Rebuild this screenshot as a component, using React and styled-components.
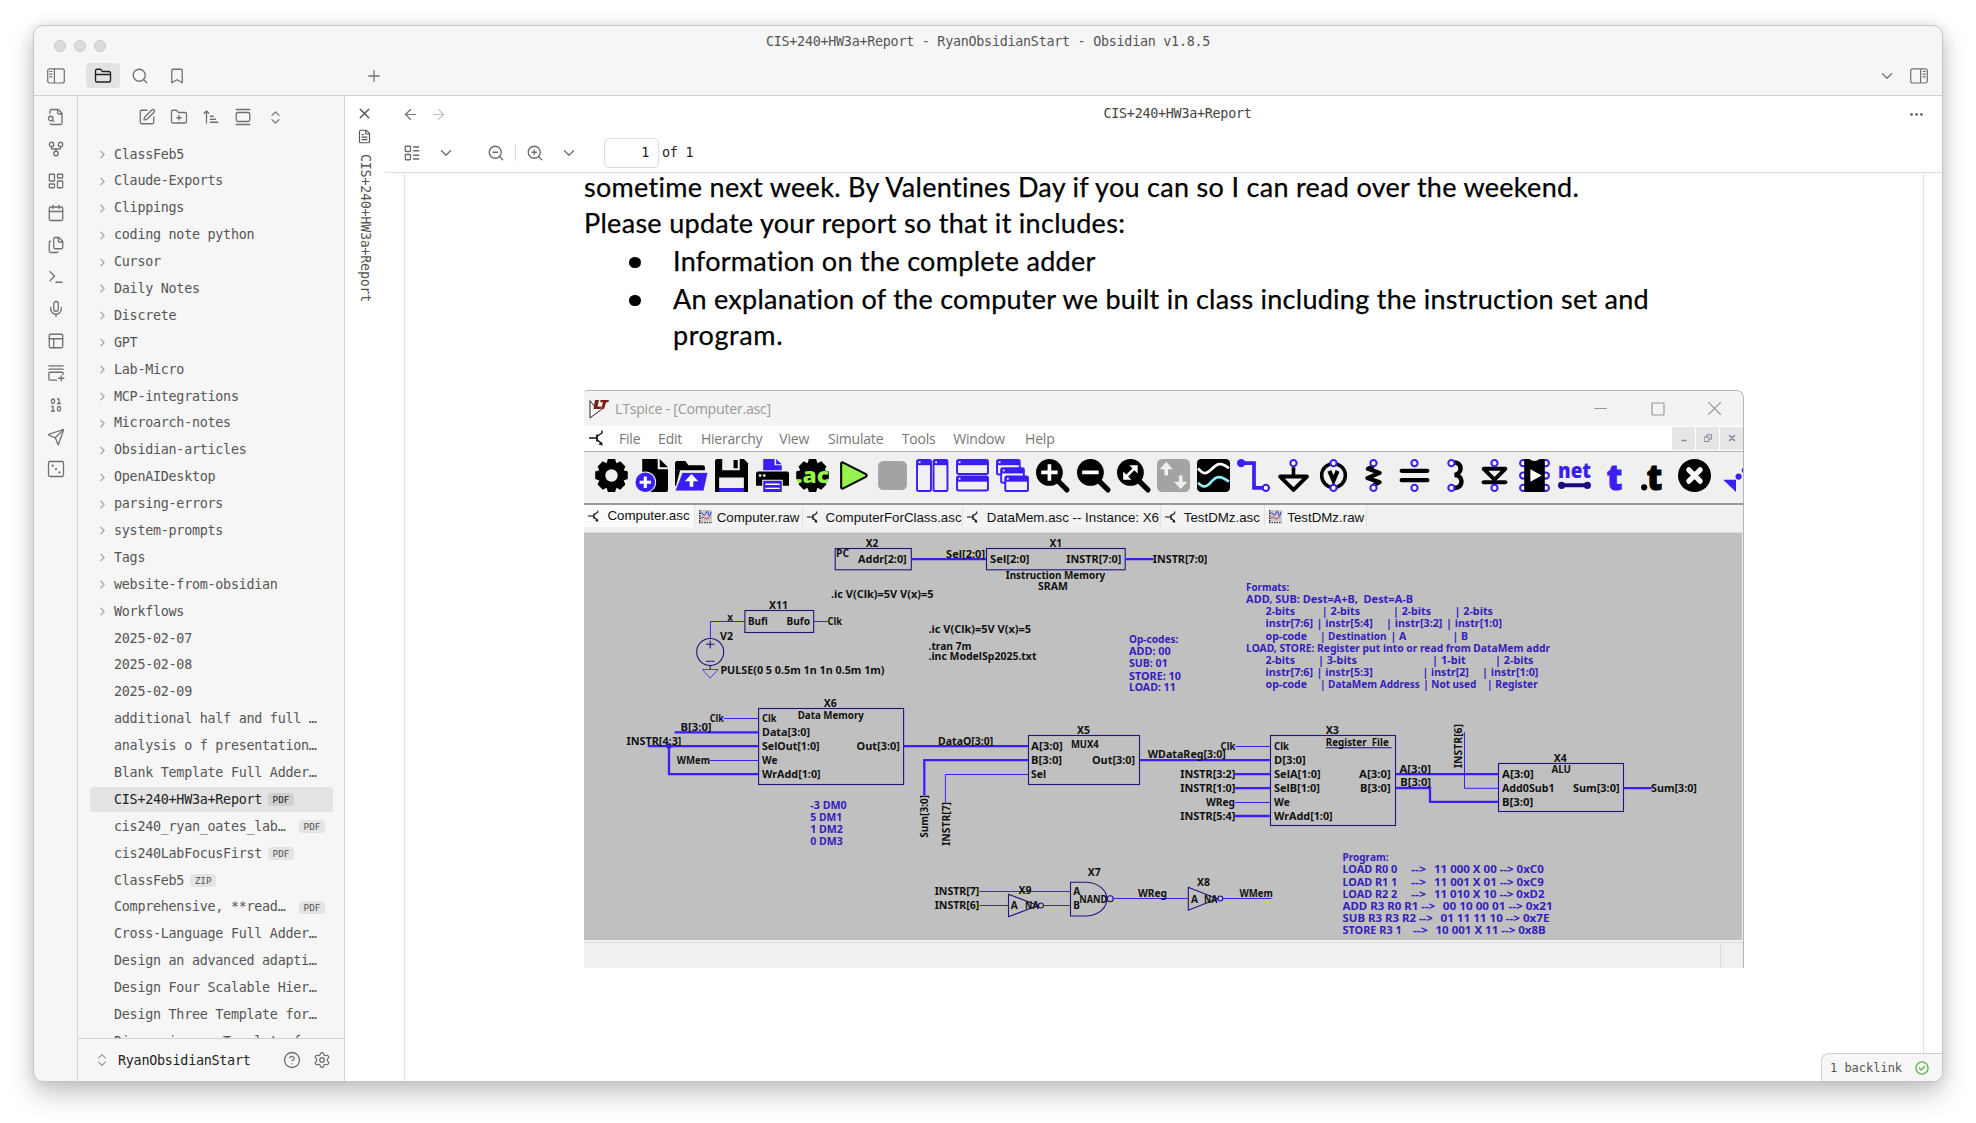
import React from "react";
import styled, { createGlobalStyle, css } from "styled-components";
import {
  SquarePen, FolderPlus, GalleryVertical, ChevronsUpDown, ChevronRight, ChevronDown,
  GitFork, LayoutDashboard, Calendar, Files, Terminal, Mic, PanelsTopLeft, Binary, Send,
  Dice3, Settings, X, FileText, ArrowLeft, ArrowRight, LayoutList, ZoomIn, ZoomOut,
  Ellipsis, Plus, Search, Bookmark, FolderClosed,
} from "lucide-react";

const MONO = '"DejaVu Sans Mono", "Liberation Mono", monospace';

const GlobalStyle = createGlobalStyle`
  *, *::before, *::after { box-sizing: border-box; }
  html, body { margin: 0; background: #fff; overflow: hidden; }
  body { font-family: ${MONO}; font-size: 13.4px; letter-spacing: -0.27px; color: #555; }
`;

const Desktop = styled.div`
  width: 1976px;
  height: 1123px;
  padding: 25px 33px 41px;
  background: #fff;
  overflow: hidden;
`;

const AppWindow = styled.div`
  width: 1910px;
  height: 1057px;
  display: flex;
  flex-direction: column;
  border: 1px solid #c6c6c6;
  border-radius: 10px;
  background: #f6f6f6;
  overflow: hidden;
  box-shadow: 0 12px 26px rgba(0, 0, 0, 0.22), 0 0 14px rgba(0, 0, 0, 0.1);
`;

const TitleBar = styled.div`
  height: 37px;
  flex: none;
  display: grid;
  grid-template-columns: 200px 1fr 200px;
  align-items: center;
`;
const Lights = styled.div`
  display: flex;
  gap: 8px;
  padding: 3px 0 0 20px;
`;
const Light = styled.span`
  width: 12px;
  height: 12px;
  border-radius: 50%;
  background: #dcdcdc;
  border: 1px solid #c8c8c8;
`;
const WindowTitle = styled.div`
  text-align: center;
  padding: 0 0 5px 0;
  line-height: 18px;
`;

const TabBar = styled.div`
  height: 33px;
  flex: none;
  display: flex;
  align-items: center;
  padding: 0 14px 7px 13px;
  border-bottom: 1px solid #d0d0d0;
  color: #707070;
`;
const IconCell = styled.span`
  width: ${(p) => p.$w || 32}px;
  height: ${(p) => p.$h || 25}px;
  flex: none;
  display: flex;
  align-items: center;
  justify-content: center;
  border-radius: 4px;
  margin-left: ${(p) => p.$ml || 0}px;
  color: ${(p) => p.$color || "inherit"};
  background: ${(p) => (p.$on ? "#e3e3e3" : "transparent")};
  svg { display: block; }
`;
const Spacer = styled.span`flex: 1;`;

const Body = styled.div`
  flex: 1;
  min-height: 0;
  display: flex;
`;

const Ribbon = styled.div`
  width: 44px;
  flex: none;
  padding-top: 5px;
  display: flex;
  flex-direction: column;
  align-items: center;
  border-right: 1px solid #d4d4d4;
  color: #707070;
`;

const Sidebar = styled.div`
  width: 267px;
  flex: none;
  display: flex;
  flex-direction: column;
  border-right: 1px solid #d0d0d0;
`;
const SidebarTools = styled.div`
  height: 45px;
  flex: none;
  display: flex;
  justify-content: center;
  align-items: center;
  padding-bottom: 3px;
  color: #707070;
`;
const Tree = styled.div`
  flex: 1;
  min-height: 0;
  overflow: hidden;
  padding: 1px 11px 0 12px;
`;
const Row = styled.div`
  height: 25px;
  margin-bottom: 1.905px;
  padding-right: 8px;
  display: flex;
  align-items: center;
  border-radius: 4px;
  white-space: pre;
  line-height: 20px;
  color: #555;
  ${(p) => p.$active && css`background: #e3e3e3; color: #222;`}
`;
const Twisty = styled.span`
  width: 24px;
  flex: none;
  padding-left: 6px;
  display: flex;
  color: #aaa;
`;
const Badge = styled.span`
  width: 26px;
  height: 13px;
  margin-left: ${(p) => (p.$end ? "auto" : "6px")};
  border-radius: 4px;
  background: ${(p) => (p.$active ? "#cfcfcf" : "#e4e4e4")};
  font-size: 9.4px;
  letter-spacing: 0;
  line-height: 13.5px;
  text-align: center;
`;
const Vault = styled.div`
  height: 43px;
  flex: none;
  display: flex;
  align-items: center;
  padding: 0 7px 0 16px;
  border-top: 1px solid #d0d0d0;
  color: #707070;
`;
const VaultName = styled.span`
  flex: 1;
  padding-left: 8px;
  color: #222;
`;

const Main = styled.div`
  flex: 1;
  min-width: 0;
  display: flex;
  background: #fff;
`;
const StackedTab = styled.div`
  width: 40px;
  flex: none;
  display: flex;
  flex-direction: column;
  align-items: center;
  padding: 6px 1px 0 0;
  color: #555;
`;
const VerticalTitle = styled.span`
  writing-mode: vertical-rl;
  line-height: 20px;
  margin-top: 6px;
`;
const Pane = styled.div`
  flex: 1;
  min-width: 0;
  display: flex;
  flex-direction: column;
`;
const PaneHeader = styled.div`
  height: 37px;
  flex: none;
  display: flex;
  align-items: center;
  padding: 0 10px 0 11px;
  color: #707070;
`;
const PaneTitle = styled.div`
  flex: 1;
  text-align: center;
  color: #444;
  padding: 0 0 2px 3px;
`;
const PdfTools = styled.div`
  height: 40px;
  flex: none;
  display: flex;
  align-items: center;
  padding: 0 0 0 11px;
  border-bottom: 1px solid #dcdcdc;
  color: #6a6a6a;
`;
const Divider = styled.span`
  width: 1px;
  height: 17px;
  margin-left: 3px;
  background: #dcdcdc;
`;
const PageInput = styled.span`
  width: 55px;
  height: 30px;
  margin: 0 4px 0 19px;
  padding: 0 9px;
  border: 1px solid #dedede;
  border-radius: 5px;
  text-align: right;
  line-height: 28px;
  color: #222;
`;
const PageCount = styled.span`
  margin-left: -1px;
  color: #222;
`;

const Viewer = styled.div`
  flex: 1;
  min-height: 0;
  padding: 0 18px 0 19px;
  overflow: hidden;
  position: relative;
`;
const Page = styled.div`
  height: 960px;
  padding-left: 179px;
  border: solid #e2e2e2;
  border-width: 0 1px;
  box-shadow: 0 0 9px rgba(0, 0, 0, 0.06);
  font-family: Lato, sans-serif;
  font-size: 27px;
  color: #000;
`;
const Line = styled.div`
  height: ${(p) => p.$h}px;
  line-height: 28px;
  white-space: nowrap;
  letter-spacing: ${(p) => p.$ls ?? 0.3}px;
  -webkit-text-stroke: 0.25px #000;
`;
const BulletLine = styled(Line)`
  display: flex;
  padding-left: 45px;
`;
const Dot = styled.span`
  width: 44px;
  height: 30.6px;
  display: flex;
  align-items: center;
  &::before { content: ""; width: 11.5px; height: 11.5px; border-radius: 50%; background: #000; }
`;
const Continuation = styled(Line)`
  padding-left: 89px;
`;
const StatusBar = styled.div`
  position: absolute;
  right: 0;
  bottom: 0;
  width: 121px;
  height: 28px;
  display: flex;
  align-items: center;
  padding: 0 13px 0 8px;
  justify-content: space-between;
  border: solid #d0d0d0;
  border-width: 1px 0 0 1px;
  border-top-left-radius: 8px;
  background: #f6f6f6;
  font-family: ${MONO};
  font-size: 12px;
  letter-spacing: -0.02px;
`;

/* LTspice window */
const Spice = styled.div`
  width: 1160px;
  height: 578px;
  margin-top: 32px;
  display: flex;
  flex-direction: column;
  border-top: 1.5px solid #b4b4b4;
  border-right: 1.5px solid #b4b4b4;
  border-top-right-radius: 8px;
  border-top-left-radius: 4px;
  overflow: hidden;
  background: #f0f0f0;
  font-family: "Open Sans", "Noto Sans", sans-serif;
  font-size: 14px;
  letter-spacing: 0;
`;
const SpiceTitle = styled.div`
  height: 35px;
  flex: none;
  display: flex;
  align-items: center;
  padding-left: 5px;
  background: #f3f3f3;
  color: #999;
`;
const SpiceCaption = styled.span`
  flex: 1;
  padding-left: 5px;
  font-size: 14.2px;
  letter-spacing: -0.26px;
`;
const SpiceMenu = styled.div`
  height: 25.5px;
  flex: none;
  display: flex;
  align-items: center;
  background: #fff;
  border-bottom: 1px solid #b0b0b0;
  padding-left: 5px;
  color: #777;
`;
const MenuItem = styled.span`
  width: ${(p) => p.$w}px;
  flex: none;
  padding-top: 1px;
  font-size: 14px;
  letter-spacing: -0.2px;
`;
const MdiButton = styled.span`
  width: 23px;
  height: 23px;
  margin-left: 1px;
  display: flex;
  align-items: center;
  justify-content: center;
  color: #8089a0;
  background: #e6e6e6;
`;
const SpiceTools = styled.div`
  height: 53px;
  flex: none;
  display: flex;
  align-items: center;
  padding: 0 0 4px 7.5px;
  border-bottom: 2px solid #999;
  overflow: hidden;
`;
const Tool = styled.span`
  width: 40.14px;
  flex: none;
  display: flex;
  justify-content: center;
`;
const SpiceTabs = styled.div`
  height: 28px;
  flex: none;
  display: flex;
  padding-bottom: 5px;
  border-bottom: 1px solid #ddd;
`;
const SpiceTab = styled.span`
  width: ${(p) => p.$w}px;
  flex: none;
  display: flex;
  align-items: center;
  padding: ${(p) => (p.$on ? "0 0 0 4px" : "3px 0 0 4px")};
  background: ${(p) => (p.$on ? "#fafafa" : "#f3f3f3")};
  border-right: 1px solid #e2e2e2;
  font-family: "Liberation Sans", Arial, sans-serif;
  font-size: 13.3px;
  color: #111;
  white-space: nowrap;
`;
const TabIcon = styled.span`
  width: ${(p) => p.$w}px;
  flex: none;
  display: flex;
`;
const Canvas = styled.div`
  height: 407px;
  flex: none;
  background: #c0c0c0;
  margin-right: 1.5px;
  svg { display: block; }
`;
const SpiceStatus = styled.div`
  flex: 1;
  display: flex;
  justify-content: flex-end;
  margin-top: 2px;
  border-top: 1px solid #dcdcdc;
`;
const Grip = styled.span`
  width: 23px;
  border-left: 1px solid #dcdcdc;
`;

/* ---------- icons ---------- */
const Ico = ({ s = 18, w = 1.7, children, vb = 24 }) => (
  <svg width={s} height={s} viewBox={`0 0 ${vb} ${vb}`} fill="none" stroke="currentColor"
    strokeWidth={w} strokeLinecap="round" strokeLinejoin="round">{children}</svg>
);
const ToggleSvg = styled.svg`
  transform: ${(p) => (p.$flip ? "scaleX(-1)" : "none")};
`;
const PanelToggle = ({ right }) => (
  <ToggleSvg $flip={right} width="18" height="16" viewBox="0 0 18 16" fill="none" stroke="currentColor" strokeWidth="1.2">
    <rect x=".7" y=".8" width="16.6" height="14.2" rx="2" />
    <path d="M7.4 .8v14.2M2.2 3.5h3.2M2.2 6.2h3.2M2.2 8.9h3.2" />
  </ToggleSvg>
);
const FileSearchIcon = () => (
  <Ico><path d="M14 2v4a2 2 0 0 0 2 2h4" /><path d="M4.268 21a2 2 0 0 0 1.727 1H18a2 2 0 0 0 2-2V7l-5-5H6a2 2 0 0 0-2 2v3" /><path d="m9 18-1.5-1.5" /><circle cx="5" cy="14" r="3" /></Ico>
);
const SortIcon = () => (
  <Ico><path d="M11 11h4M11 15h7M11 19h10M9 7 6 4 3 7M6 6v14" /></Ico>
);
const StackPlusIcon = () => (
  <Ico><path d="M2.5 2.5h19M2.5 6.8h19M21.5 14v-1.6a1.4 1.4 0 0 0-1.4-1.4H4a1.5 1.5 0 0 0-1.5 1.5V20A1.5 1.5 0 0 0 4 21.5h9M19 15.5v7M15.5 19h7" /></Ico>
);
const HelpIcon = () => (
  <Ico><circle cx="12" cy="12" r="10" /><path d="M9.1 9a3 3 0 0 1 5.8 1c0 2-3 3-3 3M12 17h.01" /></Ico>
);
const CheckBadge = () => (
  <svg width="14" height="14" viewBox="0 0 24 24" fill="none" stroke="#62b551" strokeWidth="2.4" strokeLinecap="round" strokeLinejoin="round">
    <circle cx="12" cy="12" r="10.5" /><path d="m7.5 12.5 3 3 6-6" />
  </svg>
);
const DiceIcon = () => (
  <Ico><rect x="2" y="2" width="20" height="20" rx="2" /><path d="M7.5 7.500h.01M12 12h.01M16.500 16.500h.01" strokeWidth="3" /></Ico>
);

const BL = "#3a1ff5";
const SpiceLogo = () => (
  <svg width="21" height="20" viewBox="0 0 21 20">
    <path d="M1 1.5 1 19 15 8.5" fill="#fff" stroke="#222" strokeWidth="1" />
    <path d="M1 1.5 6 8" stroke="#222" fill="none" />
    <path d="M6 1h4L8.5 7.5h4L11.5 10H4.5z" fill="#7a1d14" />
    <path d="M11.5 1H20l-.7 2.3h-2.2L15 10h-3l2-6.7h-2.8z" fill="#7a1d14" />
  </svg>
);
const Transistor = ({ s = 16 }) => (
  <svg width={s} height={s} viewBox="0 0 16 16" fill="none" stroke="#111" strokeWidth="1.4">
    <path d="M0 8h8" /><path d="M8 4.5v7" strokeWidth="1.8" /><path d="M8.5 6 13 3V.5M8.5 10l4.500 4" /><path d="m14 15.500-4.500-1 2.800-3z" fill="#111" stroke="none" />
  </svg>
);
const WaveDoc = () => (
  <svg width="13" height="14" viewBox="0 0 13 14" fill="none">
    <rect width="13" height="11" fill="#c9c9c9" />
    <path d="M1 4q1.500-3 3 0t3-1 2.500 1 2.500-2" stroke="#3a38c9" />
    <path d="M1 8.500 4 7l3 2 4-2" stroke="#c84a4a" />
    <path d="M.5 0v12M0 12.500h13" stroke="#334" strokeDasharray="1.500 1" strokeWidth="1.600" />
  </svg>
);

const S = ({ children }) => <svg width="33" height="33" viewBox="0 0 32 32" overflow="visible">{children}</svg>;
const Port = ({ x, y }) => <circle cx={x} cy={y} r="3" fill="#fff" stroke={BL} strokeWidth="2" />;
const GearPath = "M12.500 0h7l1.300 4 3.700-1.800 5 5L27.800 11l4 1.200v7.200l-4 1.400 1.700 4-5 5-3.700-1.900-1.300 4.100h-7l-1.300-4.100-3.700 1.900-5-5 1.700-4-4-1.400v-7.200l4-1.200-1.700-3.800 5-5L11.200 4z";
const Lens = ({ children }) => (
  <><circle cx="13" cy="13" r="13" /><path d="m21 21 9 9" stroke="#000" strokeWidth="5" strokeLinecap="round" />{children}</>
);
const MiniWindow = ({ x, y, w, h }) => (
  <><rect x={x} y={y} width={w} height={h} rx="1.500" fill="#f0f0f0" stroke={BL} strokeWidth="1.900" />
    <rect x={x} y={y} width={w} height="5" fill={BL} /><circle cx={x + 2.500} cy={y + 2.200} r="1" fill="#fff" /></>
);
const ToolText = styled.text`
  font-family: "Open Sans", "Noto Sans", sans-serif;
  font-weight: 800;
`;
const spiceTools = [
  <S><path d={GearPath} /><circle cx="16" cy="16" r="6" fill="#f0f0f0" /></S>,
  <S><path d="M7 0h15v10h10v20a2 2 0 0 1-2 2H7z" /><path d="M24 0v8h8z" /><circle cx="10" cy="22.500" r="10.500" fill="#f0f0f0" /><circle cx="10" cy="22.500" r="9" fill={BL} stroke={BL} /><path d="M10 17v11M4.500 22.500h11" stroke="#fff" strokeWidth="3" /></S>,
  <S><path d="M0 4a2 2 0 0 1 2-2h8l3 4h14a2 2 0 0 1 2 2v3H0z" /><path d="M0 11h5L1 26H0z" /><path d="M7 13h25l-4 18H0z" fill={BL} stroke="#f0f0f0" strokeWidth=".800" /><path d="M16 27v-7" stroke="#fff" strokeWidth="3.500" /><path d="M9.500 21.500h13L16 14.500z" fill="#fff" /></S>,
  <S><path d="M0 2a2 2 0 0 1 2-2h26l4 4v28H0z" /><path d="M7 0h17v11H7z" fill="#f0f0f0" /><path d="M18 1h4v8h-4z" /><path d="M4 18h24v10H4z" fill="#f0f0f0" /><path d="M4 28h24v4H4z" fill={BL} /></S>,
  <S><path d="M7 0h11v6h7v5H7z" fill={BL} /><path d="M19.500 0v5H25z" fill={BL} /><path d="M0 14a2 2 0 0 1 2-2h28a2 2 0 0 1 2 2v12h-6v-6H6v6H0z" /><circle cx="4" cy="16" r="1.300" fill="#fff" /><circle cx="8" cy="16" r="1.300" fill="#fff" /><path d="M7 21h18v11H7z" fill={BL} /><path d="M9 24.500h14M9 28.500h14" stroke="#fff" strokeWidth="1.400" /></S>,
  <S><path d={GearPath} /><ToolText x="0" y="23" textLength="32" lengthAdjust="spacingAndGlyphs" fontSize="20" fill="#96f34e">.ac</ToolText></S>,
  <S><path d="M5 4.500v23a1.300 1.300 0 0 0 2 1L29 17.300a1.500 1.500 0 0 0 0-2.600L7 3.500a1.300 1.300 0 0 0-2 1z" fill="#96f34e" stroke="#000" strokeWidth="2" /></S>,
  <S><rect x="2" y="2" width="28" height="28" rx="5" fill="#a3a3a3" /></S>,
  <S><MiniWindow x={1} y={1} w={13.500} h={30} /><MiniWindow x={17} y={1} w={13.500} h={30} /></S>,
  <S><MiniWindow x={1} y={1} w={30} h={13.500} /><MiniWindow x={1} y={17} w={30} h={13.500} /></S>,
  <S><MiniWindow x={1} y={1} w={22} h={14} /><MiniWindow x={5} y={9} w={22} h={14} /><MiniWindow x={9} y={17} w={22} h={14} /></S>,
  <S><Lens><path d="M13 5v16M5 13h16" stroke="#fff" strokeWidth="3.500" /></Lens></S>,
  <S><Lens><path d="M5 13h16" stroke="#fff" strokeWidth="3.500" /></Lens></S>,
  <S><Lens><path d="m9 17 8-8" stroke="#fff" strokeWidth="2.500" /><path d="M12 6h8v8zM6 12v8h8z" fill="#fff" /></Lens></S>,
  <S><rect width="32" height="32" rx="5" fill="#a3a3a3" /><path d="M9 16V7M23 16v9" stroke="#f0f0f0" strokeWidth="3.500" /><path d="m2.500 10 6.500-7 6.500 7zM16.500 22l6.500 7 6.500-7z" fill="#f0f0f0" /></S>,
  <S><rect width="32" height="32" rx="4" /><path d="M1 9c5 6 8 6 13 1s9-8 17-1" fill="none" stroke="#fff" strokeWidth="2.600" /><path d="M1 23c5 5 8 5 13-1s9-6 17 0" fill="none" stroke="#8eeef5" strokeWidth="2.600" /></S>,
  <S><circle cx="4" cy="4" r="4" fill={BL} /><path d="M4 4h12.500v24H26" fill="none" stroke={BL} strokeWidth="3.600" /><Port x={28} y={28} /></S>,
  <S><path d="M16 8v9" stroke="#000" strokeWidth="3.500" /><path d="M3 17h26L16 30z" fill="#f0f0f0" stroke="#000" strokeWidth="3.800" strokeLinejoin="round" /><Port x={16} y={4} /></S>,
  <S><circle cx="16" cy="16" r="11.500" fill="#f0f0f0" stroke="#000" strokeWidth="3.400" /><path d="m12 11.500 4 9.500 4-9.500" fill="none" stroke="#000" strokeWidth="4" /><Port x={16} y={4} /><Port x={16} y={28} /></S>,
  <S><path d="M16 7 10.500 9.500 22 13.500 10 18.500l12 4-6 3" fill="none" stroke="#000" strokeWidth="4" strokeLinejoin="round" /><Port x={16} y={4} /><Port x={16} y={28} /></S>,
  <S><path d="M3.500 11.500h25M3.500 20.500h25" stroke="#000" strokeWidth="4" strokeLinecap="round" /><Port x={16} y={4} /><Port x={16} y={28} /></S>,
  <S><path d="M15 3.500c9-1 9 11 1 12 9 0 9 13 0 12.500" fill="none" stroke="#000" strokeWidth="4.400" /><Port x={13} y={4} /><Port x={13} y={28} /></S>,
  <S><path d="M5.500 9.500h21L16 20z" fill="#f0f0f0" stroke="#000" strokeWidth="3.800" strokeLinejoin="round" /><path d="M5.500 22.500h21" stroke="#000" strokeWidth="4" strokeLinecap="round" /><Port x={16} y={4} /><Port x={16} y={28} /></S>,
  <S>{[4, 16, 28].map((y) => <React.Fragment key={y}><Port x={5} y={y} /><Port x={27} y={y} /></React.Fragment>)}<path d="M6 0h5q5 4 10 0h5v32H6z" /><path d="M12 10v12l11-6z" fill="#fff" /></S>,
  <S><ToolText x="0" y="18" textLength="32" lengthAdjust="spacingAndGlyphs" fontSize="20" fill={BL}>net</ToolText><path d="M4 25.500h24" stroke="#1d0a80" strokeWidth="4" /><circle cx="3.500" cy="25.500" r="3.500" fill="#1d0a80" /><circle cx="28.500" cy="25.500" r="3.500" fill="#1d0a80" /></S>,
  <S><ToolText x="8.500" y="30" textLength="15" lengthAdjust="spacingAndGlyphs" fontSize="35" fill={BL} stroke={BL}>t</ToolText></S>,
  <S><circle cx="6" cy="27.500" r="3" /><ToolText x="8.500" y="30" textLength="15" lengthAdjust="spacingAndGlyphs" fontSize="35" stroke="#000">t</ToolText></S>,
  <S><circle cx="16" cy="16" r="16" /><path d="m10.500 10.500 11 11M21.500 10.500l-11 11" stroke="#fff" strokeWidth="5" strokeLinecap="round" /></S>,
  <S><path d="M4 20h12.500v12z" fill={BL} /><circle cx="19" cy="17" r="3" fill={BL} /><circle cx="25" cy="11" r="3" fill={BL} /><path d="M24 0h6v6z" fill={BL} /></S>,
];

/* ---------- schematic ---------- */
// [x, vertical centre, width, label]
const labels = [
  [865.8, 543, 12.6, "X2"], [836, 553.3, 13, "PC"], [858.1, 559.3, 48.6, "Addr[2:0]"],
  [946.1, 553.7, 39, "Sel[2:0]"], [1049.5, 543, 12.6, "X1"], [990.1, 559.3, 39.4, "Sel[2:0]"],
  [1066.3, 559.3, 55, "INSTR[7:0]"], [1152.8, 559.3, 54.6, "INSTR[7:0]"],
  [1005.8, 575, 99.5, "Instruction Memory"], [1038, 585.7, 29.8, "SRAM"],
  [831, 593.7, 102.5, ".ic V(Clk)=5V V(x)=5"], [769, 605.3, 19, "X11"],
  [748, 621.3, 19.8, "Bufi"], [786.6, 621.3, 23.4, "Bufo"], [727.3, 616.5, 5.7, "x"],
  [827.5, 621.3, 14.5, "Clk"], [720, 635.7, 13, "V2"],
  [720.4, 670, 164.1, "PULSE(0 5 0.5m 1n 1n 0.5m 1m)"],
  [928.5, 629, 102.5, ".ic V(Clk)=5V V(x)=5"], [928.5, 646.3, 43, ".tran 7m"],
  [928.5, 656.3, 108, ".inc ModelSp2025.txt"],
  [823.7, 703, 13, "X6"], [709.7, 718, 14.1, "Clk"], [762, 718.3, 14.6, "Clk"],
  [797.7, 715.3, 66.2, "Data Memory"], [680.6, 726.7, 31, "B[3:0]"], [762, 732.3, 48, "Data[3:0]"],
  [626.6, 740.7, 54.8, "INSTR[4:3]"], [762, 746.3, 57.5, "SelOut[1:0]"], [856.6, 746.3, 43.3, "Out[3:0]"],
  [676.8, 760.3, 33.2, "WMem"], [762, 760.3, 15.4, "We"], [762, 774.3, 58.6, "WrAdd[1:0]"],
  [938.1, 740.7, 55.1, "DataO[3:0]"], [1077, 730, 13, "X5"], [1031.1, 746.3, 31.8, "A[3:0]"],
  [1070.9, 744, 27.9, "MUX4"], [1031.1, 760.3, 31, "B[3:0]"], [1092, 760.3, 43.2, "Out[3:0]"],
  [1031.1, 774.3, 15, "Sel"], [1147.8, 754.3, 78, "WDataReg[3:0]"],
  [1087.7, 871.7, 13, "X7"], [934.7, 891.3, 44.7, "INSTR[7]"], [934.7, 905.3, 44.7, "INSTR[6]"],
  [1018.5, 889.7, 13, "X9"], [1010.8, 905.3, 7, "A"], [1025, 905.3, 13.7, "NA"],
  [1073.2, 891.3, 7, "A"], [1073.2, 905.3, 6.6, "B"], [1079.3, 899, 28, "NAND"],
  [1137.9, 893.3, 29, "WReg"], [1197.1, 882.3, 13, "X8"], [1191, 899, 7, "A"], [1204, 899, 13.4, "NA"],
  [1239.6, 893.3, 33.3, "WMem"], [1325.7, 730, 13.3, "X3"], [1220.5, 746, 14.9, "Clk"],
  [1274, 746.3, 14.9, "Clk"], [1325.7, 741.7, 63.1, "Register  File"], [1274, 760.3, 31.8, "D[3:0]"],
  [1180.3, 774.3, 55, "INSTR[3:2]"], [1274, 774.3, 46.7, "SelA[1:0]"], [1359, 774.3, 31.7, "A[3:0]"],
  [1180.3, 788.3, 55, "INSTR[1:0]"], [1274, 788.3, 45.9, "SelB[1:0]"], [1360, 788.3, 30.7, "B[3:0]"],
  [1205.9, 802.3, 29.1, "WReg"], [1274, 802.3, 15.7, "We"],
  [1180.3, 816.3, 55, "INSTR[5:4]"], [1274, 816.3, 58.6, "WrAdd[1:0]"],
  [1399.5, 768.5, 31.5, "A[3:0]"], [1400.3, 782.3, 30.7, "B[3:0]"],
  [1553.8, 757.7, 13, "X4"], [1551.5, 768.7, 19.5, "ALU"], [1502, 774.3, 31.9, "A[3:0]"],
  [1502, 788.3, 52.5, "Add0Sub1"], [1572.9, 788.3, 46.7, "Sum[3:0]"], [1502, 802.3, 31.3, "B[3:0]"],
  [1651, 788.3, 45.9, "Sum[3:0]"],
];
const notes = [
  [1129, 639, 49.4, "Op-codes:"], [1129, 651, 41.7, "ADD: 00"], [1129, 663.3, 38.7, "SUB: 01"],
  [1129, 675.7, 52, "STORE: 10"], [1129, 687.3, 46.7, "LOAD: 11"],
  [1246.1, 587.3, 43.2, "Formats:"], [1246.1, 599.3, 166.9, "ADD, SUB: Dest=A+B,  Dest=A-B"],
  [1265.6, 611, 29.4, "2-bits"], [1321.8, 611, 38.3, "| 2-bits"], [1393, 611, 38, "| 2-bits"], [1454.5, 611, 38.5, "| 2-bits"],
  [1265.6, 623.3, 47.4, "instr[7:6]"], [1316.5, 623.3, 56.3, "| instr[5:4]"], [1386.1, 623.3, 56.3, "| instr[3:2]"], [1446, 623.3, 56, "| instr[1:0]"],
  [1265.6, 635.7, 41.4, "op-code"], [1319.9, 635.7, 66.6, "| Destination"], [1390.5, 635.7, 15.9, "| A"], [1452.5, 635.7, 15.5, "| B"],
  [1246.1, 648, 303.9, "LOAD, STORE: Register put into or read from DataMem addr"],
  [1265.6, 660.3, 29.4, "2-bits"], [1318, 660.3, 39, "| 3-bits"], [1432, 660.3, 33.7, "| 1-bit"], [1495.1, 660.3, 38.4, "| 2-bits"],
  [1265.6, 672, 47.4, "instr[7:6]"], [1316.5, 672, 56.3, "| instr[5:3]"], [1422.5, 672, 46.3, "| instr[2]"], [1482, 672, 56.4, "| instr[1:0]"],
  [1265.6, 684.3, 41.4, "op-code"], [1319.9, 684.3, 99.9, "| DataMem Address"], [1423.2, 684.3, 53.2, "| Not used"], [1487, 684.3, 50.7, "| Register"],
  [810.3, 805.3, 36.4, "-3 DM0"], [810.3, 817.3, 31.8, "5 DM1"], [810.3, 829.3, 32.6, "1 DM2"], [810.3, 841.3, 32.6, "0 DM3"],
  [1342.5, 857, 46, "Program:"],
  [1342.5, 869.3, 54.8, "LOAD R0 0"], [1411, 869.3, 15, "-->"], [1434, 869.3, 109.8, "11 000 X 00 --> 0xC0"],
  [1342.5, 881.7, 54.8, "LOAD R1 1"], [1411, 881.7, 15, "-->"], [1434, 881.7, 109.8, "11 001 X 01 --> 0xC9"],
  [1342.5, 894, 54.8, "LOAD R2 2"], [1411, 894, 15, "-->"], [1434, 894, 110.5, "11 010 X 10 --> 0xD2"],
  [1342.5, 905.7, 92.6, "ADD R3 R0 R1 -->"], [1442.8, 905.7, 109.8, "00 10 00 01 --> 0x21"],
  [1342.5, 917.7, 90.3, "SUB R3 R3 R2 -->"], [1440.5, 917.7, 109, "01 11 11 10 --> 0x7E"],
  [1342.5, 930, 59.3, "STORE R3 1"], [1412.9, 930, 15, "-->"], [1435.5, 930, 110.2, "10 001 X 11 --> 0x8B"],
];
const Diagram = styled.svg`
  font-family: "Noto Sans", "Open Sans", sans-serif;
  font-weight: 700;
  font-size: 11.4px;
  text { white-space: pre; }
`;
const Label = ({ d: [x, y, w, t], fill }) => (
  <text x={x} y={y + 4} textLength={w} lengthAdjust="spacingAndGlyphs" fill={fill}>{t}</text>
);
const Schematic = () => (
  <Diagram width="1157" height="407" viewBox="584 533 1157 407">
    <g fill="none" stroke="#22127e" strokeWidth="1.1">
      <rect x="835.2" y="548.5" width="76.1" height="21.3" />
      <rect x="986.5" y="548.5" width="138.7" height="21.3" />
      <rect x="744.9" y="610.5" width="68.8" height="22" />
      <rect x="758.6" y="708.5" width="145" height="76" />
      <rect x="1028.5" y="735.5" width="111" height="49" />
      <rect x="1270.5" y="735.5" width="125" height="90" />
      <rect x="1498.5" y="763.5" width="125" height="48" />
      <circle cx="710.2" cy="652" r="13.5" />
      <path d="M706 644.3h8.5M710.2 640.5v8M706 661.3h8.5M710.2 665.5v4M1325.7 747.7h66" />
      <path d="M1008.5 894.3v22.4L1038 905.5zM1188.3 887.3v22.9l29-11.5z" />
      <path d="M1070.5 882.3h16c13 .5 20.4 9 20.4 16.7s-7 16.5-20.4 17h-16z" />
      <circle cx="1041" cy="905.5" r="2.5" /><circle cx="1110.2" cy="898.7" r="3" /><circle cx="1220.3" cy="898.5" r="2.5" />
    </g>
    <path d="M702.5 669.5h15.500l-7.800 8.700z" fill="none" stroke="#5343dc" />
    <g fill="none" stroke={BL} strokeWidth="1">
      <path d="M744.9 621.5h-34.5v17M813.7 621.5h14M723.8 718.5h35M710 760.5h48.6M1028.4 774.5h-83v28M979.4 891.5h91M979.4 905.5h29M1043.5 905.5h27M1113 898.5h75M1223 898.5h48.4M1235.4 746.5h35M1235.4 802.5h35M1464.5 732.3v56h34" />
    </g>
    <g fill="none" stroke={BL} strokeWidth="2.3">
      <path d="M911.3 559.2h75M1125.2 559.2h28.3M674.5 732.3h84M647.7 746.2h111M669 746.2v28h89.6M903.7 746.2h124.7M1028.4 760.2H924.3v35M1139.4 760.2h131M1234.5 774.2h36M1234.5 788.2h36M1234.5 816h36M1395.7 774.2h103M1395.7 788h34.3v13.9h68.5M1623.4 788.2h28.3" />
    </g>
    <circle cx="669" cy="746.2" r="2.6" fill={BL} />
    {labels.map((d, i) => <Label key={i} d={d} fill="#111" />)}
    {notes.map((d, i) => <Label key={i} d={d} fill="#3420bd" />)}
    <g fill="#111">
      <text transform="translate(928 837.7) rotate(-90)" textLength="42.7" lengthAdjust="spacingAndGlyphs">Sum[3:0]</text>
      <text transform="translate(949.5 845.7) rotate(-90)" textLength="43.7" lengthAdjust="spacingAndGlyphs">INSTR[7]</text>
      <text transform="translate(1462 768) rotate(-90)" textLength="44" lengthAdjust="spacingAndGlyphs">INSTR[6]</text>
    </g>
  </Diagram>
);

const folders = ["ClassFeb5", "Claude-Exports", "Clippings", "coding note python", "Cursor", "Daily Notes",
  "Discrete", "GPT", "Lab-Micro", "MCP-integrations", "Microarch-notes", "Obsidian-articles", "OpenAIDesktop",
  "parsing-errors", "system-prompts", "Tags", "website-from-obsidian", "Workflows"];
const files = [
  ["2025-02-07"], ["2025-02-08"], ["2025-02-09"], ["additional half and full …"], ["analysis o f presentation…"],
  ["Blank Template Full Adder…"], ["CIS+240+HW3a+Report", "PDF"], ["cis240_ryan_oates_lab…", "PDF", true],
  ["cis240LabFocusFirst", "PDF"], ["ClassFeb5", "ZIP"], ["Comprehensive, **read…", "PDF", true],
  ["Cross-Language Full Adder…"], ["Design an advanced adapti…"], ["Design Four Scalable Hier…"],
  ["Design Three Template for…"], ["Discussion on Template fo…"],
];
const menu = [["File", 39.1], ["Edit", 42.8], ["Hierarchy", 78.4], ["View", 48.7], ["Simulate", 73.8],
  ["Tools", 51.5], ["Window", 71.8], ["Help", 60]];
const spiceTabs = [["Computer.asc", 110.5, 19.5, "t"], ["Computer.raw", 108.3, 18.2, "w"],
  ["ComputerForClass.asc", 160, 18.8, "t"], ["DataMem.asc -- Instance: X6", 198, 20, "t"],
  ["TestDMz.asc", 104, 19, "t"], ["TestDMz.raw", 102, 18.5, "w"]];
const L = { size: 18, strokeWidth: 1.7 };

export default function App() {
  const ribbon = [<FileSearchIcon />, <GitFork {...L} />, <LayoutDashboard {...L} />, <Calendar {...L} />,
    <Files {...L} />, <Terminal {...L} />, <Mic {...L} />, <PanelsTopLeft {...L} />, <StackPlusIcon />,
    <Binary {...L} />, <Send {...L} />, <DiceIcon />];
  return (
    <Desktop>
      <GlobalStyle />
      <AppWindow>
        <TitleBar>
          <Lights><Light /><Light /><Light /></Lights>
          <WindowTitle>CIS+240+HW3a+Report - RyanObsidianStart - Obsidian v1.8.5</WindowTitle>
        </TitleBar>
        <TabBar>
          <IconCell $w={18}><PanelToggle /></IconCell>
          <IconCell $w={34} $ml={21} $on $color="#222"><FolderClosed size={18} strokeWidth={1.8} /></IconCell>
          <IconCell $w={34} $ml={3}><Search {...L} /></IconCell>
          <IconCell $w={34} $ml={3}><Bookmark {...L} /></IconCell>
          <IconCell $w={20} $ml={170}><Plus {...L} /></IconCell>
          <Spacer />
          <IconCell $w={20}><ChevronDown size={18} strokeWidth={1.6} /></IconCell>
          <IconCell $w={18} $ml={13}><PanelToggle right /></IconCell>
        </TabBar>
        <Body>
          <Ribbon>{ribbon.map((r, i) => <IconCell key={i} $h={32}>{r}</IconCell>)}</Ribbon>
          <Sidebar>
            <SidebarTools>
              <IconCell><SquarePen {...L} /></IconCell>
              <IconCell><FolderPlus {...L} /></IconCell>
              <IconCell><SortIcon /></IconCell>
              <IconCell><GalleryVertical {...L} /></IconCell>
              <IconCell><ChevronsUpDown size={17} strokeWidth={1.7} /></IconCell>
            </SidebarTools>
            <Tree>
              {folders.map((f) => (
                <Row key={f}><Twisty><ChevronRight size={13} strokeWidth={2.4} /></Twisty>{f}</Row>
              ))}
              {files.map(([name, tag, end], i) => {
                const active = name.startsWith("CIS");
                return (
                  <Row key={i} $active={active}><Twisty />{name}
                    {tag && <Badge $end={end} $active={active}>{tag}</Badge>}
                  </Row>
                );
              })}
            </Tree>
            <Vault>
              <ChevronsUpDown size={16} strokeWidth={1.7} color="#999" />
              <VaultName>RyanObsidianStart</VaultName>
              <IconCell $w={30}><HelpIcon /></IconCell>
              <IconCell $w={30}><Settings {...L} /></IconCell>
            </Vault>
          </Sidebar>
          <Main>
            <StackedTab>
              <IconCell $h={22}><X size={17} strokeWidth={2} /></IconCell>
              <IconCell $h={24}><FileText size={15} strokeWidth={1.9} /></IconCell>
              <VerticalTitle>CIS+240+HW3a+Report</VerticalTitle>
            </StackedTab>
            <Pane>
              <PaneHeader>
                <IconCell $w={28}><ArrowLeft size={17} strokeWidth={1.7} /></IconCell>
                <IconCell $w={28} $color="#c4c4c4"><ArrowRight size={17} strokeWidth={1.7} /></IconCell>
                <PaneTitle>CIS+240+HW3a+Report</PaneTitle>
                <IconCell $w={32}><Ellipsis size={17} strokeWidth={2.2} /></IconCell>
              </PaneHeader>
              <PdfTools>
                <IconCell><LayoutList {...L} /></IconCell>
                <IconCell $ml={2}><ChevronDown size={18} strokeWidth={1.7} /></IconCell>
                <IconCell $ml={18}><ZoomOut {...L} /></IconCell>
                <Divider />
                <IconCell $ml={3}><ZoomIn {...L} /></IconCell>
                <IconCell $ml={2}><ChevronDown size={18} strokeWidth={1.7} /></IconCell>
                <PageInput>1</PageInput>
                <PageCount>of 1</PageCount>
              </PdfTools>
              <Viewer>
                <Page>
                  <Line $h={36}>sometime next week. By Valentines Day if you can so I can read over the weekend.</Line>
                  <Line $h={38}>Please update your report so that it includes:</Line>
                  <BulletLine $h={38}><Dot />Information on the complete adder</BulletLine>
                  <BulletLine $h={36} $ls={0.27}><Dot />An explanation of the computer we built in class including the instruction set and</BulletLine>
                  <Continuation $h={37} $ls={0.6}>program.</Continuation>
                  <Spice>
                    <SpiceTitle>
                      <SpiceLogo />
                      <SpiceCaption>LTspice - [Computer.asc]</SpiceCaption>
                      <IconCell $w={57}><Ico s={13} w={1} vb={13}><path d="M.5 6.500h12" /></Ico></IconCell>
                      <IconCell $w={57}><Ico s={14} w={1.2} vb={14}><rect x="1" y="1" width="12" height="12" rx="1" /></Ico></IconCell>
                      <IconCell $w={57}><Ico s={13} w={1.1} vb={13}><path d="m.5.500 12 12M12.500.500l-12 12" /></Ico></IconCell>
                    </SpiceTitle>
                    <SpiceMenu>
                      <TabIcon $w={30}><Transistor /></TabIcon>
                      {menu.map(([t, w]) => <MenuItem key={t} $w={w}>{t}</MenuItem>)}
                      <Spacer />
                      <MdiButton><Ico s={8} w={1.5} vb={8}><path d="M2 6.500h4" /></Ico></MdiButton>
                      <MdiButton><Ico s={8} w={1} vb={8}><path d="M.5 3h4.500v4.500H.5zM2.500 3V.7h5v4.500H5" /></Ico></MdiButton>
                      <MdiButton><Ico s={8} w={1.5} vb={8}><path d="m1.500 1.500 5 5M6.500 1.500l-5 5" /></Ico></MdiButton>
                    </SpiceMenu>
                    <SpiceTools>{spiceTools.map((t, i) => <Tool key={i}>{t}</Tool>)}</SpiceTools>
                    <SpiceTabs>
                      {spiceTabs.map(([t, w, iw, k], i) => (
                        <SpiceTab key={t} $w={w} $on={i === 0}>
                          <TabIcon $w={iw}>{k === "t" ? <Transistor s={12} /> : <WaveDoc />}</TabIcon>{t}
                        </SpiceTab>
                      ))}
                    </SpiceTabs>
                    <Canvas><Schematic /></Canvas>
                    <SpiceStatus><Grip /></SpiceStatus>
                  </Spice>
                </Page>
                <StatusBar><span>1 backlink</span><CheckBadge /></StatusBar>
              </Viewer>
            </Pane>
          </Main>
        </Body>
      </AppWindow>
    </Desktop>
  );
}
